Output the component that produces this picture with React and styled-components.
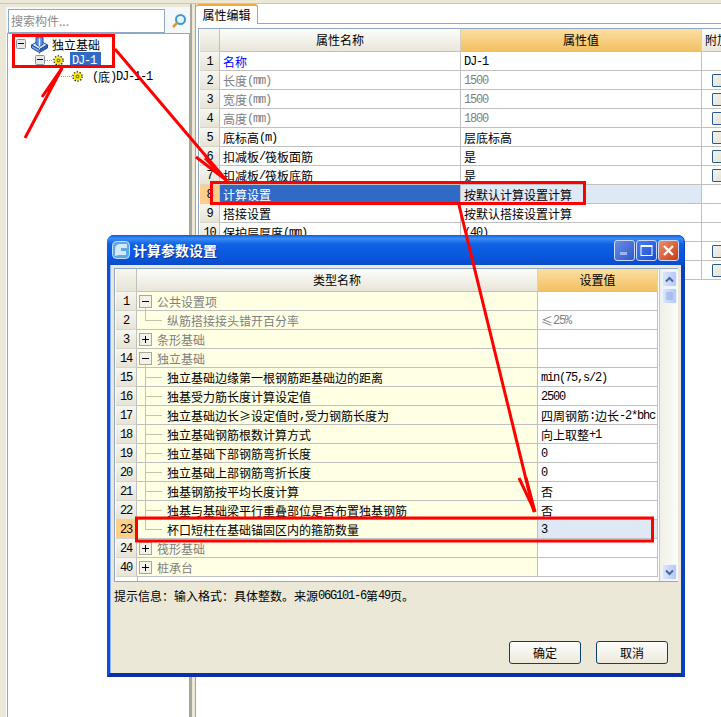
import React from "react";
import styled, { createGlobalStyle } from "styled-components";

const Global = createGlobalStyle`
  html, body { margin: 0; padding: 0; background: #fff; }
  * { box-sizing: border-box; }
`;

const Page = styled.div`
  position: relative;
  width: 721px;
  height: 717px;
  overflow: hidden;
  display: flex;
  flex-direction: column;
  background: #ebe8d8;
  font: 12px/1 "Noto Sans CJK SC", sans-serif;
  color: #000;
`;
const TopStrip = styled.div`
  height: 4px;
  flex: none;
  background: #ebe8d8;
  border-bottom: 1px solid #c9c7b8;
`;
const Workspace = styled.div`
  flex: 1;
  display: flex;
  min-height: 0;
`;
const LeftPanel = styled.div`
  width: 184px;
  margin-left: 6px;
  flex: none;
  display: flex;
  flex-direction: column;
  background: #fff;
  border-top: 3px solid #ebe8d8;
`;
const SearchRow = styled.div`
  height: 26px;
  flex: none;
  display: flex;
  padding: 2px 0 0 2px;
  gap: 2px;
  background: #f6f7fb;
`;
const SearchInput = styled.div`
  width: 157px;
  height: 24px;
  border: 1px solid #8fa8c8;
  background: #fff;
  color: #8a8a8a;
  font-size: 12px;
  display: flex;
  align-items: center;
  padding-left: 2px;
`;
const SearchButton = styled.div`
  flex: 1;
  display: flex;
  align-items: center;
  justify-content: center;
`;
const TreePanel = styled.div`
  flex: 1;
  margin-left: 1px;
  border: 1px solid #8fa8c8;
  border-bottom: 0;
  background: #fff;
  padding-top: 2px;
`;
const TreeRow = styled.div`
  height: 16px;
  display: flex;
  align-items: center;
  padding-left: ${(p) => p.$indent}px;
  gap: ${(p) => p.$gap || 0}px;
`;
const Selected = styled.span`
  background: #316ac5;
  color: #fff;
  padding: 0 2px;
  height: 16px;
  margin-left: 6px;
  display: inline-flex;
  align-items: center;
  width: 31px;
`;
const TreeLabel = styled.span`
  margin-left: ${(p) => p.$ml || 0}px;
  white-space: nowrap;
`;
const Splitter = styled.div`
  width: 5px;
  flex: none;
  background: linear-gradient(90deg, #a9a89c 0, #a9a89c 2px, #ebe8d8 2px);
`;
const RightPanel = styled.div`
  flex: 1;
  min-width: 0;
  background: #fff;
  border-left: 1px solid #8fa8c8;
  overflow: hidden;
`;
const TabStrip = styled.div`
  height: 20px;
  border-bottom: 1px solid #8fa8c8;
  display: flex;
  align-items: flex-end;
`;
const Tab = styled.div`
  width: 62px;
  height: 20px;
  border-top: 2px solid #f2a93b;
  border-right: 1px solid #8fa8c8;
  background: #fff;
  margin-bottom: -1px;
  display: flex;
  align-items: center;
  justify-content: center;
  border-radius: 3px 3px 0 0;
`;
const PropGrid = styled.div`
  margin: 4px 0 0 2px;
  width: 560px;
  border: 1px solid #8fa8c8;
  border-right: 0;
  border-bottom: 0;
  padding: 0 0 0 1px;
  display: grid;
  grid-template-columns: 20px 241px 241px 60px;
  grid-auto-rows: 19px;
  grid-template-rows: 23px;
`;
const Cell = styled.div`
  border-right: 1px solid #c0c0c0;
  border-bottom: 1px solid #c0c0c0;
  padding-left: 3px;
  display: flex;
  align-items: center;
  white-space: nowrap;
  overflow: hidden;
  color: ${(p) => p.$color || "#000"};
  background: ${(p) => p.$bg || "transparent"};
`;
const NumCell = styled.div`
  border-right: 1px solid #c0c0c0;
  border-bottom: 1px solid #d8d6c8;
  display: flex;
  align-items: center;
  justify-content: center;
  background: ${(p) =>
    p.$active
      ? "#ffce8a"
      : "linear-gradient(180deg,#f7f6f0,#e6e4d6)"};
`;
const Head = styled.div`
  border-right: 1px solid #d4d2c4;
  border-bottom: 1px solid #c0c0c0;
  display: flex;
  align-items: center;
  justify-content: ${(p) => (p.$start ? "flex-start" : "center")};
  padding-left: ${(p) => (p.$start ? "3px" : "0")};
  white-space: nowrap;
  background: ${(p) =>
    p.$hot
      ? "linear-gradient(180deg,#fbdfa2,#f3c062)"
      : "linear-gradient(180deg,#fdfdfb,#e8e6da)"};
`;
const Check = styled.span`
  width: 13px;
  height: 13px;
  margin-left: 7px;
  border: 1px solid #2a5a85;
  border-radius: 1px;
  flex: none;
  background: linear-gradient(135deg, #f4f4ee, #e0e0d6);
`;
const Run = styled.span`
  display: inline-flex;
  align-items: center;
  padding-top: 2px;
  white-space: nowrap;
`;
const Latin = styled.span`
  font: 12px/1 "Liberation Mono", monospace;
  letter-spacing: -1.2px;
`;

const Dialog = styled.div`
  position: absolute;
  left: 107px;
  top: 235px;
  width: 578px;
  height: 442px;
  display: flex;
  flex-direction: column;
  background: #0a50d8;
  border-radius: 7px 7px 0 0;
  border: 3px solid #0a4fd6;
  border-top: 0;
  border-bottom: 4px solid #0a2fa8;
  border-right: 4px solid #0a3fc0;
`;
const TitleBar = styled.div`
  height: 30px;
  flex: none;
  margin: 0 -3px 0 -3px;
  padding: 0 5px 0 5px;
  display: flex;
  align-items: center;
  border-radius: 7px 7px 0 0;
  color: #fff;
  font-size: 14px;
  font-weight: 700;
  text-shadow: 1px 1px 0 #0a2f90;
  background: linear-gradient(180deg, #0a5fe0 0, #3c8cf5 12%, #0f62e4 30%, #0a55dc 75%, #0a4cc8 100%);
`;
const TitleText = styled.span`
  margin-left: 3px;
  flex: 1;
`;
const WinButton = styled.span`
  width: 21px;
  height: 21px;
  margin-left: 1px;
  flex: none;
  border: 1px solid #c8d8f8;
  border-radius: 3px;
  display: flex;
  align-items: center;
  justify-content: center;
  background: ${(p) =>
    p.$close
      ? "linear-gradient(135deg,#e8906a,#c83c14)"
      : p.$dim
      ? "linear-gradient(135deg,#6a8ce8,#3058c8)"
      : "linear-gradient(135deg,#4a80f0,#1c4cd0)"};
`;
const Client = styled.div`
  flex: 1;
  display: flex;
  flex-direction: column;
  background: #ebe8d8;
  border-left: 1px solid #8fb0f0;
  padding: 3px 3px 9px 3px;
`;
const TableFrame = styled.div`
  height: 314px;
  flex: none;
  border: 1px solid #8fa8c8;
  background: #fff;
  display: flex;
  padding: 0 0 0 1px;
`;
const ParamGrid = styled.div`
  width: 542px;
  flex: none;
  display: grid;
  grid-template-columns: 21px 401px 120px;
  grid-template-rows: 23px;
  grid-auto-rows: 19px;
  align-content: start;
  position: relative;
  &::after {
    content: "";
    height: 4px;
    grid-column: 2 / 4;
    border-left: 1px solid #c0c0c0;
  }
`;
const Scrollbar = styled.div`
  width: 19px;
  margin-left: 1px;
  flex: none;
  border-left: 1px solid #c8c8c0;
  background: linear-gradient(90deg, #f0f0e8, #fbfbf8);
  display: flex;
  flex-direction: column;
  padding: 2px 1px 1px 2px;
`;
const ScrollBtn = styled.div`
  width: 15px;
  height: ${(p) => p.$h}px;
  margin-top: ${(p) => p.$mt || 0}px;
  border: 1px solid #eef2fc;
  border-radius: 2px;
  background: linear-gradient(90deg, #dbe6fb, #b4c8f4);
  display: flex;
  align-items: center;
  justify-content: center;
`;
const ScrollBtnEnd = styled(ScrollBtn)`
  margin-top: auto;
`;
const Hint = styled.div`
  margin-top: 6px;
  height: 14px;
  display: flex;
  align-items: center;
  white-space: nowrap;
`;
const Footer = styled.div`
  margin-top: auto;
  display: flex;
  justify-content: flex-end;
  gap: 15px;
  padding-right: 10px;
`;
const Button = styled.div`
  width: 72px;
  height: 23px;
  border: 1px solid #0f3f70;
  border-radius: 3px;
  background: linear-gradient(180deg, #fdfdfb, #ece9dc);
  display: flex;
  align-items: center;
  justify-content: center;
`;
const Overlay = styled.svg`
  position: absolute;
  left: 0;
  top: 0;
  pointer-events: none;
`;
const GuideSvg = styled.svg`
  flex: none;
  margin-left: -1px;
`;
const ConnectorSvg = styled.svg`
  overflow: visible;
  flex: none;
`;

function T({ children }) {
  const parts = String(children).split(/([\x20-\x7e]+)/).filter(Boolean);
  return (
    <Run>
      {parts.map((p, i) =>
        /^[\x20-\x7e]+$/.test(p) ? <Latin key={i}>{p}</Latin> : <span key={i}>{p}</span>
      )}
    </Run>
  );
}

const Expander = ({ connector }) => (
  <ConnectorSvg width="10" height="10" viewBox="0 0 10 10">
    {connector && <path d="M4.5 -8V0" stroke="#999" strokeDasharray="1 1" />}
    <rect x="0.5" y="0.5" width="9" height="9" rx="1" fill="#e8e8e4" stroke="#7f93a8" />
    <path d="M2 4.5h6" stroke="#000" />
  </ConnectorSvg>
);

const Gear = () => (
  <svg width="11" height="11" viewBox="0 0 11 11">
    <circle cx="5.5" cy="5.5" r="4" fill="#f8f000" />
    <circle cx="5.5" cy="5.5" r="4.6" fill="none" stroke="#222200" strokeWidth="1.3" strokeDasharray="1.4 1.5" />
    <circle cx="5.5" cy="5.5" r="2" fill="#8a7a10" />
    <circle cx="5.5" cy="5.5" r="0.8" fill="#f8f000" />
  </svg>
);

const FoundationIcon = () => (
  <svg width="17" height="17" viewBox="0 0 17 17">
    <path d="M0.5 9l8-4.5 8 4.5-8 4.5z" fill="#dce9fb" stroke="#1f4f9c" />
    <path d="M0.5 9v3l8 4.5v-3z" fill="#7aa4e0" stroke="#1f4f9c" />
    <path d="M16.5 9v3l-8 4.5v-3z" fill="#2f62b4" stroke="#1f4f9c" />
    <path d="M5 1.5l3.5-1 3.5 1v7l-3.5 2-3.5-2z" fill="#5f90dc" stroke="#1f4f9c" />
    <path d="M8.5 2.5v8" stroke="#e6f0ff" strokeWidth="1.4" />
  </svg>
);

const Guide = ({ kind }) => (
  <GuideSvg width="28" height="19" viewBox="0 0 28 19">
    <path d={kind === "last" ? "M6.5 0v9.5" : "M6.5 0v19"} stroke="#c4c4a8" />
    <path d="M6 9.5h17" stroke="#c4c4a8" />
  </GuideSvg>
);

const ExpanderCell = ({ open, line }) => (
  <GuideSvg width="18" height="19" viewBox="0 0 18 19">
    {line && <path d="M6.5 14v5" stroke="#c4c4a8" />}
    <rect x="0.5" y="3.5" width="12" height="12" fill="#f2f2ea" stroke="#a8a898" />
    <path d="M3 9.5h7" stroke="#000" />
    {!open && <path d="M6.5 6v7" stroke="#000" />}
  </GuideSvg>
);

const props = [
  ["1", "名称", "DJ-1", "#0000ff", "#000", false],
  ["2", "长度(mm)", "1500", "#808080", "#808080", true],
  ["3", "宽度(mm)", "1500", "#808080", "#808080", true],
  ["4", "高度(mm)", "1800", "#808080", "#808080", true],
  ["5", "底标高(m)", "层底标高", "#000", "#000", true],
  ["6", "扣减板/筏板面筋", "是", "#000", "#000", true],
  ["7", "扣减板/筏板底筋", "是", "#000", "#000", true],
  ["8", "计算设置", "按默认计算设置计算", "#fff", "#000", false],
  ["9", "搭接设置", "按默认搭接设置计算", "#000", "#000", false],
  ["10", "保护层厚度(mm)", "(40)", "#000", "#000", false],
  ["11", "", "", "#000", "#000", true],
  ["12", "", "", "#000", "#000", true],
];

const params = [
  ["1", "group", "公共设置项", "", true, true],
  ["2", "last", "纵筋搭接接头错开百分率", "≤25%", false, false, true],
  ["3", "group", "条形基础", "", false],
  ["14", "group", "独立基础", "", true, true],
  ["15", "mid", "独立基础边缘第一根钢筋距基础边的距离", "min(75,s/2)"],
  ["16", "mid", "独基受力筋长度计算设定值", "2500"],
  ["17", "mid", "独立基础边长≥设定值时,受力钢筋长度为", "四周钢筋:边长-2*bhc"],
  ["18", "mid", "独立基础钢筋根数计算方式", "向上取整+1"],
  ["19", "mid", "独立基础下部钢筋弯折长度", "0"],
  ["20", "mid", "独立基础上部钢筋弯折长度", "0"],
  ["21", "mid", "独基钢筋按平均长度计算", "否"],
  ["22", "mid", "独基与基础梁平行重叠部位是否布置独基钢筋", "否"],
  ["23", "last", "杯口短柱在基础锚固区内的箍筋数量", "3"],
  ["24", "group", "筏形基础", "", false],
  ["40", "group", "桩承台", "", false],
];

export default function App() {
  return (
    <Page>
      <Global />
      <TopStrip />
      <Workspace>
        <LeftPanel>
          <SearchRow>
            <SearchInput>搜索构件...</SearchInput>
            <SearchButton>
              <svg width="16" height="16" viewBox="0 0 16 16">
                <circle cx="9.5" cy="6.5" r="4.5" fill="#e6f4fa" stroke="#3f9ac8" strokeWidth="2" />
                <path d="M6 10l-4 4" stroke="#d6a030" strokeWidth="2.5" />
              </svg>
            </SearchButton>
          </SearchRow>
          <TreePanel>
            <TreeRow $indent={8} $gap={5}>
              <Expander />
              <FoundationIcon />
              <TreeLabel $ml={-1}><T>独立基础</T></TreeLabel>
            </TreeRow>
            <TreeRow $indent={27}>
              <Expander connector />
              <svg width="8" height="3" viewBox="0 0 8 3"><path d="M0 1.5h8" stroke="#999" strokeDasharray="1 1" /></svg>
              <Gear />
              <Selected><T>DJ-1</T></Selected>
            </TreeRow>
            <TreeRow $indent={53}>
              <svg width="11" height="3" viewBox="0 0 11 3"><path d="M0 1.5h11" stroke="#999" strokeDasharray="1 1" /></svg>
              <Gear />
              <TreeLabel $ml={9}><T>(底)DJ-1-1</T></TreeLabel>
            </TreeRow>
          </TreePanel>
        </LeftPanel>
        <Splitter />
        <RightPanel>
          <TabStrip>
            <Tab>属性编辑</Tab>
          </TabStrip>
          <PropGrid>
            <NumCell />
            <Head>属性名称</Head>
            <Head $hot>属性值</Head>
            <Head $start>附加</Head>
            {props.map(([n, name, val, c1, c2, chk]) => {
              const active = n === "8";
              return (
                <React.Fragment key={n}>
                  <NumCell $active={active}><T>{n}</T></NumCell>
                  <Cell $color={c1} $bg={active ? "#316ac5" : undefined}><T>{name}</T></Cell>
                  <Cell $color={c2} $bg={active ? "#dfe8f5" : undefined}><T>{val}</T></Cell>
                  <Cell>{chk && <Check />}</Cell>
                </React.Fragment>
              );
            })}
          </PropGrid>
        </RightPanel>
      </Workspace>

      <Dialog>
        <TitleBar>
          <svg width="18" height="18" viewBox="0 0 18 18">
            <rect x="0.5" y="0.5" width="17" height="17" rx="4" fill="#5fa8e8" stroke="#bfe0f8" />
            <path d="M3 15V8c0-3 2-5 6-5h6v4H9v3h5v4H7z" fill="#e8f4fc" opacity="0.85" />
          </svg>
          <TitleText>计算参数设置</TitleText>
          <WinButton $dim>
            <svg width="11" height="11" viewBox="0 0 11 11"><rect x="1" y="7" width="7" height="3" fill="#9ab4ee" /></svg>
          </WinButton>
          <WinButton>
            <svg width="13" height="13" viewBox="0 0 13 13"><rect x="1" y="1.5" width="11" height="10" fill="none" stroke="#fff" /><path d="M1 2h11" stroke="#fff" strokeWidth="2" /></svg>
          </WinButton>
          <WinButton $close>
            <svg width="13" height="13" viewBox="0 0 13 13"><path d="M2 2l9 9M11 2l-9 9" stroke="#fff" strokeWidth="2.4" /></svg>
          </WinButton>
        </TitleBar>
        <Client>
          <TableFrame>
            <ParamGrid>
              <NumCell />
              <Head>类型名称</Head>
              <Head $hot>设置值</Head>
              {params.map(([n, kind, name, val, open, line, grey]) => {
                const active = n === "23";
                const isGroup = kind === "group";
                return (
                  <React.Fragment key={n}>
                    <NumCell $active={active}><T>{n}</T></NumCell>
                    <Cell $bg="#ffffe3" $color={isGroup || grey ? "#808080" : "#000"}>
                      {isGroup ? <ExpanderCell open={open} line={line} /> : <Guide kind={kind} />}
                      <T>{name}</T>
                    </Cell>
                    <Cell $color={grey ? "#808080" : "#000"} $bg={active ? "#dfe8f5" : undefined}><T>{val}</T></Cell>
                  </React.Fragment>
                );
              })}
            </ParamGrid>
            <Scrollbar>
              <ScrollBtn $h={16}>
                <svg width="9" height="7" viewBox="0 0 9 7"><path d="M1 5.5l3.5-3.5 3.5 3.5" fill="none" stroke="#4a6a9c" strokeWidth="2" /></svg>
              </ScrollBtn>
              <ScrollBtn $h={16} $mt={1}>
                <svg width="7" height="8" viewBox="0 0 7 8"><path d="M0 1h7M0 3h7M0 5h7M0 7h7" stroke="#8ea8dc" /></svg>
              </ScrollBtn>
              <ScrollBtnEnd $h={16}>
                <svg width="9" height="7" viewBox="0 0 9 7"><path d="M1 1.5l3.5 3.5 3.5-3.5" fill="none" stroke="#4a6a9c" strokeWidth="2" /></svg>
              </ScrollBtnEnd>
            </Scrollbar>
          </TableFrame>
          <Hint><T>提示信息：输入格式：具体整数。来源06G101-6第49页。</T></Hint>
          <Footer>
            <Button>确定</Button>
            <Button>取消</Button>
          </Footer>
        </Client>
      </Dialog>

      <Overlay width="721" height="717" viewBox="0 0 721 717">
        <g fill="none" stroke="#ff0000" strokeWidth="3" strokeLinejoin="miter">
          <rect x="13.5" y="35.5" width="100" height="31" />
          <rect x="211.5" y="182.5" width="373" height="21" />
          <rect x="136.5" y="518" width="516" height="23" />
          <path d="M25 138L62 68" />
          <path d="M42 97L62 68M48 92L62 68" />
          <path d="M115 49L227 181" />
          <path d="M196 157L226 180M205 158L227 181" />
          <path d="M459 205L534 512" />
          <path d="M519 478L535 512M526 478L535 512" />
        </g>
      </Overlay>
    </Page>
  );
}
